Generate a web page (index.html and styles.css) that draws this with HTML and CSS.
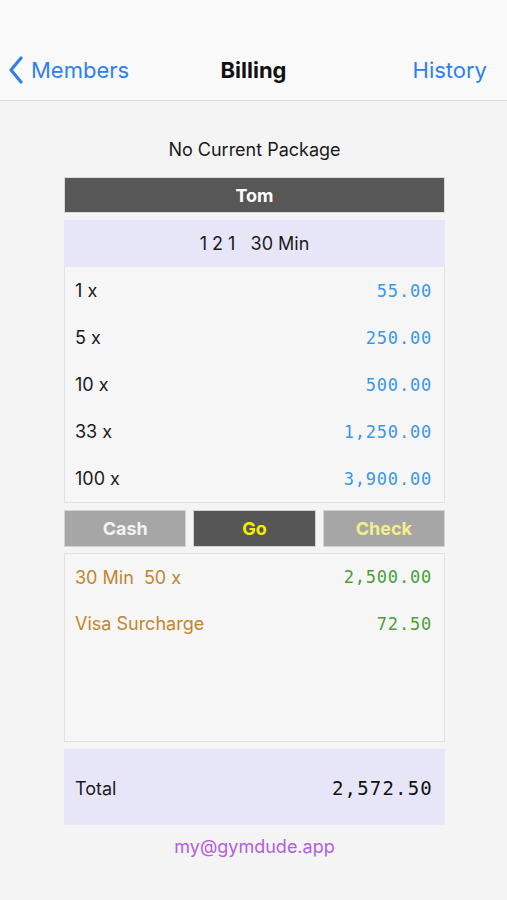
FILE: index.html
```html
<!DOCTYPE html>
<html>
<head>
<meta charset="utf-8">
<link rel="stylesheet" href="styles.css">
</head>
<body>
<header class="nav">
  <a class="nav-back">
    <svg class="chev" width="16" height="28" viewBox="0 0 16 28"><path d="M13 2 L3 14 L13 26" fill="none" stroke="currentColor" stroke-width="3.2" stroke-linecap="round" stroke-linejoin="round"/></svg>
    <span>Members</span>
  </a>
  <div class="nav-title">Billing</div>
  <a class="nav-right">History</a>
</header>
<main class="content">
  <div class="status">No Current Package</div>
  <div class="member">Tom</div>
  <div class="pkg">1 2 1 &nbsp; 30 Min</div>
  <div class="list">
    <div class="row"><span>1 x</span><span class="num blue">55.00</span></div>
    <div class="row"><span>5 x</span><span class="num blue">250.00</span></div>
    <div class="row"><span>10 x</span><span class="num blue">500.00</span></div>
    <div class="row"><span>33 x</span><span class="num blue">1,250.00</span></div>
    <div class="row"><span>100 x</span><span class="num blue">3,900.00</span></div>
  </div>
  <div class="buttons">
    <div class="btn cash">Cash</div>
    <div class="btn go">Go</div>
    <div class="btn check">Check</div>
  </div>
  <div class="cart">
    <div class="row"><span class="orange">30 Min &nbsp;50 x</span><span class="num green">2,500.00</span></div>
    <div class="row"><span class="orange">Visa Surcharge</span><span class="num green">72.50</span></div>
  </div>
  <div class="total">
    <span>Total</span><span class="num total-num">2,572.50</span>
  </div>
  <div class="email">my@gymdude.app</div>
</main>
</body>
</html>
```
FILE: styles.css
```css
* { box-sizing: border-box; }
html, body { margin: 0; padding: 0; }
body {
  width: 507px;
  height: 900px;
  background: #f4f4f4;
  font-family: "Inter", "Roboto", sans-serif;
  color: #1a1a1a;
  overflow: hidden;
}
.nav {
  height: 101px;
  background: #f9f9f9;
  border-bottom: 1px solid #dcdcdc;
  display: flex;
  align-items: center;
  justify-content: space-between;
  padding: 40px 20px 0 8px;
  position: relative;
  font-size: 22px;
}
.nav-back {
  display: flex;
  align-items: center;
  gap: 7px;
  color: #2f80f0;
}
.chev { display: block; }
.nav-title {
  position: absolute;
  left: 0; right: 0;
  top: 40px; bottom: 0;
  display: flex;
  align-items: center;
  justify-content: center;
  font-weight: 700;
  color: #111;
  pointer-events: none;
}
.nav-right { color: #2f80f0; }
.content {
  width: 381px;
  margin-left: 64px;
  display: flex;
  flex-direction: column;
}
.status {
  margin-top: 38px;
  height: 22px;
  line-height: 22px;
  text-align: center;
  font-size: 18px;
  color: #1a1a1a;
}
.member {
  margin-top: 16px;
  height: 36px;
  background: #575757;
  border: 1px solid #d8d8d8;
  color: #fff;
  font-weight: 700;
  font-size: 18px;
  display: flex;
  align-items: center;
  justify-content: center;
}
.pkg {
  margin-top: 7px;
  height: 47px;
  background: #e7e6f8;
  display: flex;
  align-items: center;
  justify-content: center;
  font-size: 18px;
  color: #1a1a1a;
}
.list, .cart {
  background: #f6f6f6;
  border: 1px solid #e2e2e2;
  border-top: none;
}
.list { height: 236px; }
.cart {
  margin-top: 6px;
  height: 189px;
  border-top: 1px solid #e2e2e2;
}
.row {
  height: 47px;
  display: flex;
  align-items: center;
  justify-content: space-between;
  padding: 0 12px 0 10px;
  font-size: 18px;
}
.cart .row:first-child { height: 46px; }
.num {
  font-family: "DejaVu Sans Mono", "Liberation Mono", monospace;
  font-size: 17px;
  letter-spacing: 0.8px;
}
.blue { color: #3b97e8; }
.green { color: #4c9e3a; }
.orange { color: #c0862f; }
.buttons {
  margin-top: 7px;
  height: 37px;
  display: grid;
  grid-template-columns: 1fr 1fr 1fr;
  gap: 7px;
}
.btn {
  display: flex;
  align-items: center;
  justify-content: center;
  font-weight: 700;
  font-size: 18px;
  border: 1px solid #d2d2d2;
}
.cash { background: #a6a6a6; color: #f2f2f2; }
.go { background: #565656; color: #f2f000; }
.check { background: #a6a6a6; color: #f2f088; }
.total {
  margin-top: 7px;
  height: 76px;
  background: #e7e6f8;
  display: flex;
  align-items: center;
  justify-content: space-between;
  padding: 0 12px 0 11px;
  font-size: 18px;
  padding-top: 2px;
}
.total-num {
  font-size: 19px;
  color: #111;
  letter-spacing: 1.2px;
}
.email {
  margin-top: 11px;
  text-align: center;
  font-size: 18px;
  color: #b25fe0;
}
```
